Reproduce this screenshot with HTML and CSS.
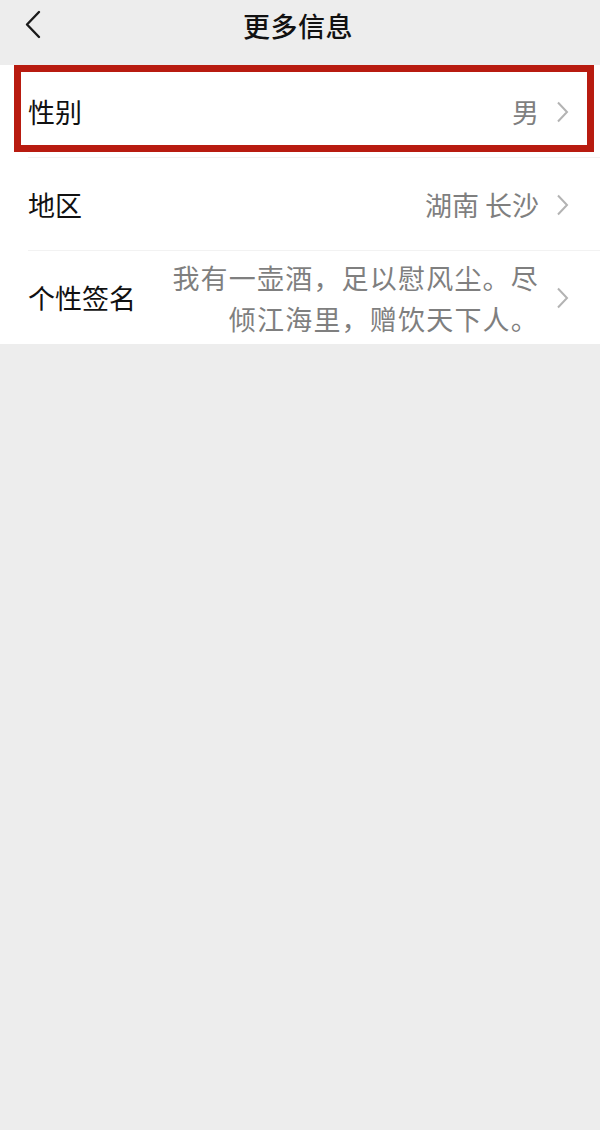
FILE: index.html
```html
<!DOCTYPE html>
<html lang="zh-CN">
<head>
<meta charset="utf-8">
<title>更多信息</title>
<link rel="stylesheet" href="styles.css">
</head>
<body>
<header class="nav">
  <div class="nav-left">
    <svg class="back" width="18" height="30" viewBox="0 0 18 30"><path d="M15 2 L3 14.5 L15 27" fill="none" stroke="#1a1a1a" stroke-width="2.4" stroke-linecap="round" stroke-linejoin="round"/></svg>
  </div>
  <h1 class="nav-title">更多信息</h1>
  <div class="nav-right"></div>
</header>
<section class="list">
  <div class="row">
    <span class="label">性别</span>
    <span class="value">男</span>
    <svg class="chev" width="13" height="22" viewBox="0 0 13 22"><path d="M2 1.5 L11 11 L2 20.5" fill="none" stroke="#b3b3b3" stroke-width="2"/></svg>
  </div>
  <div class="row">
    <span class="label">地区</span>
    <span class="value">湖南 长沙</span>
    <svg class="chev" width="13" height="22" viewBox="0 0 13 22"><path d="M2 1.5 L11 11 L2 20.5" fill="none" stroke="#b3b3b3" stroke-width="2"/></svg>
  </div>
  <div class="row row-last">
    <span class="label">个性签名</span>
    <span class="value value-multi">我有一壶酒，足以慰风尘。尽倾江海里，赠饮天下人。</span>
    <svg class="chev" width="13" height="22" viewBox="0 0 13 22"><path d="M2 1.5 L11 11 L2 20.5" fill="none" stroke="#b3b3b3" stroke-width="2"/></svg>
  </div>
  <div class="highlight"></div>
</section>
</body>
</html>
```

FILE: styles.css
```css
html, body {
  margin: 0;
  padding: 0;
}
body {
  width: 600px;
  min-height: 1130px;
  background: #ededed;
  font-family: "Noto Sans CJK SC", "Noto Sans", sans-serif;
  color: #111;
}
.nav {
  height: 65px;
  display: grid;
  grid-template-columns: 1fr auto 1fr;
  align-items: start;
  background: #ededed;
}
.nav-left {
  display: flex;
  padding-left: 24px;
  padding-top: 10px;
}
.back {
  display: block;
}
.nav-title {
  margin: 6px 0 0 -4px;
  font-size: 27px;
  font-weight: 500;
  line-height: 40px;
  color: #111;
  letter-spacing: 0.5px;
}
.list {
  position: relative;
  background: #fff;
}
.row {
  position: relative;
  height: 93px;
  display: flex;
  align-items: center;
  padding: 0 31px 0 28px;
  box-sizing: border-box;
}
.row::after {
  content: "";
  position: absolute;
  left: 28px;
  right: 0;
  bottom: 0;
  height: 1px;
  background: #f2f2f2;
}
.row-last::after {
  display: none;
}
.label {
  font-size: 27px;
  line-height: 40px;
  color: #111;
  white-space: nowrap;
  flex: none;
}
.value {
  flex: 1;
  text-align: right;
  font-size: 27px;
  line-height: 40px;
  color: #7f7f7f;
  margin-right: 17px;
  margin-left: 30px;
}
.value-multi {
  line-height: 41px;
  margin-left: 31px;
  letter-spacing: 1.2px;
}
.chev {
  display: block;
  flex: none;
}
.highlight {
  position: absolute;
  top: 0;
  left: 14px;
  width: 580px;
  height: 87px;
  box-sizing: border-box;
  border: 7px solid #b81b10;
  pointer-events: none;
}
```
